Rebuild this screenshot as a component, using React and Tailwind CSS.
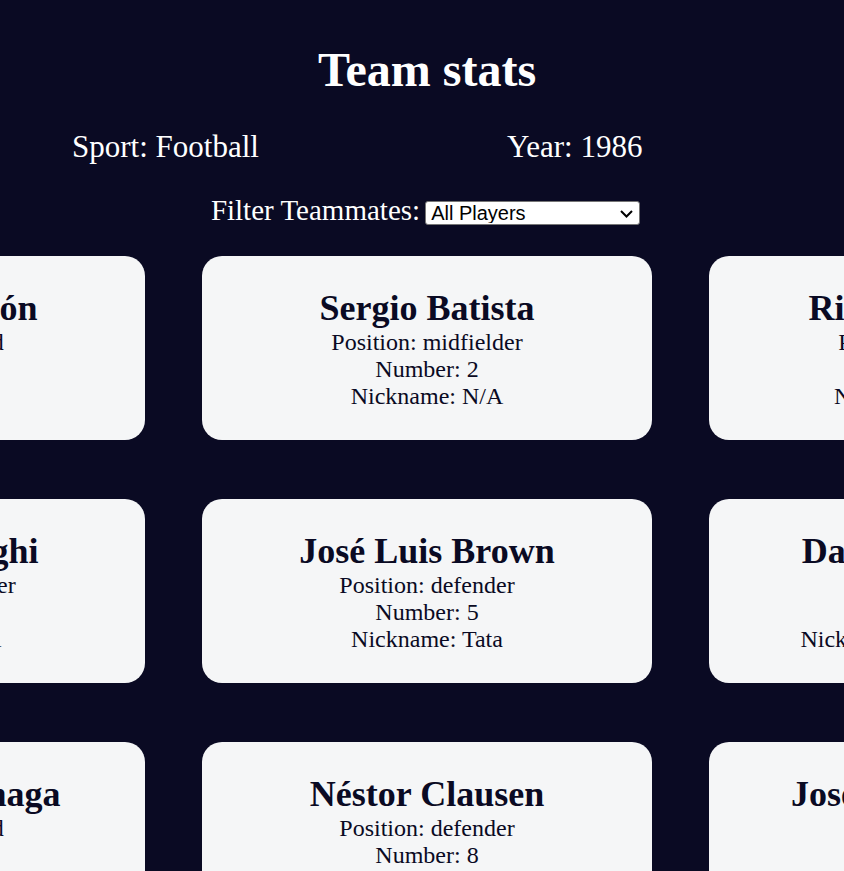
import React, { useState } from 'react';

const players = [
  { name: 'Sergio Almirón', position: 'forward', number: 1, nickname: null },
  { name: 'Sergio Batista', position: 'midfielder', number: 2, nickname: null },
  { name: 'Ricardo Bochini', position: 'midfielder', number: 3, nickname: 'El Bocha' },
  { name: 'Claudio Borghi', position: 'midfielder', number: 4, nickname: 'Bichi' },
  { name: 'José Luis Brown', position: 'defender', number: 5, nickname: 'Tata' },
  { name: 'Daniel Passarella', position: 'defender', number: 6, nickname: 'El Gran Capitán' },
  { name: 'Jorge Burruchaga', position: 'forward', number: 7, nickname: 'Burru' },
  { name: 'Néstor Clausen', position: 'defender', number: 8, nickname: null },
  { name: 'José Luis Cuciuffo', position: 'defender', number: 9, nickname: 'El Cuchu' },
];

const PlayerCard = ({ player }) => (
  <div className="h-[184px] rounded-[20px] bg-[#f5f6f7] text-[#0a0a23] flex flex-col items-center justify-center text-center">
    <h2 className="text-[36px] leading-[42px] font-bold whitespace-nowrap">{player.name}</h2>
    <p className="text-[24px] leading-[27px] whitespace-nowrap">Position: {player.position}</p>
    <p className="text-[24px] leading-[27px] whitespace-nowrap">Number: {player.number}</p>
    <p className="text-[24px] leading-[27px] whitespace-nowrap">Nickname: {player.nickname ?? 'N/A'}</p>
  </div>
);

const App = () => {
  const [filter, setFilter] = useState('all');

  return (
    <div className="w-[844px] h-[871px] overflow-hidden bg-[#0a0a23] text-white font-['Liberation_Serif','Times_New_Roman',serif]">
      <div className="w-[854px]">
        {/* Header */}
        <h1 className="pt-[42px] text-center text-[48px] leading-[56px] font-bold">Team stats</h1>

        <div className="mt-[31px] flex pl-[72px] gap-[248px] text-[31px] leading-[36px]">
          <p>Sport: Football</p>
          <p>Year: 1986</p>
        </div>

        <div className="mt-[28px] flex items-center justify-center gap-[5px] pr-[3px] text-[29px] leading-[34px]">
          <label htmlFor="players">Filter Teammates:</label>
          <div className="relative mt-[6px]">
            <select
              id="players"
              value={filter}
              onChange={(e) => setFilter(e.target.value)}
              className="appearance-none block w-[215px] h-[24px] bg-white text-black border border-[#767676] rounded-[3px] text-[20px] leading-none pl-[5px] font-['Liberation_Sans',Arial,sans-serif]"
            >
              <option value="all">All Players</option>
              <option value="nickname">Nicknames</option>
              <option value="forward">Forwards</option>
              <option value="midfielder">Midfielders</option>
              <option value="defender">Defenders</option>
              <option value="goalkeeper">Goalkeepers</option>
            </select>
            <svg
              className="pointer-events-none absolute right-[7px] top-[9px]"
              width="13"
              height="8"
              viewBox="0 0 13 8"
              fill="none"
            >
              <path d="M1 1l5.5 5.5L12 1" stroke="#000" strokeWidth="2" />
            </svg>
          </div>
        </div>

        {/* Cards */}
        <div className="mt-[29px] flex justify-center">
          <div className="grid grid-cols-[450px_450px_450px] gap-x-[57px] gap-y-[59px] shrink-0">
            {players.map((p) => (
              <PlayerCard key={p.number} player={p} />
            ))}
          </div>
        </div>
      </div>
    </div>
  );
};

export default App;
